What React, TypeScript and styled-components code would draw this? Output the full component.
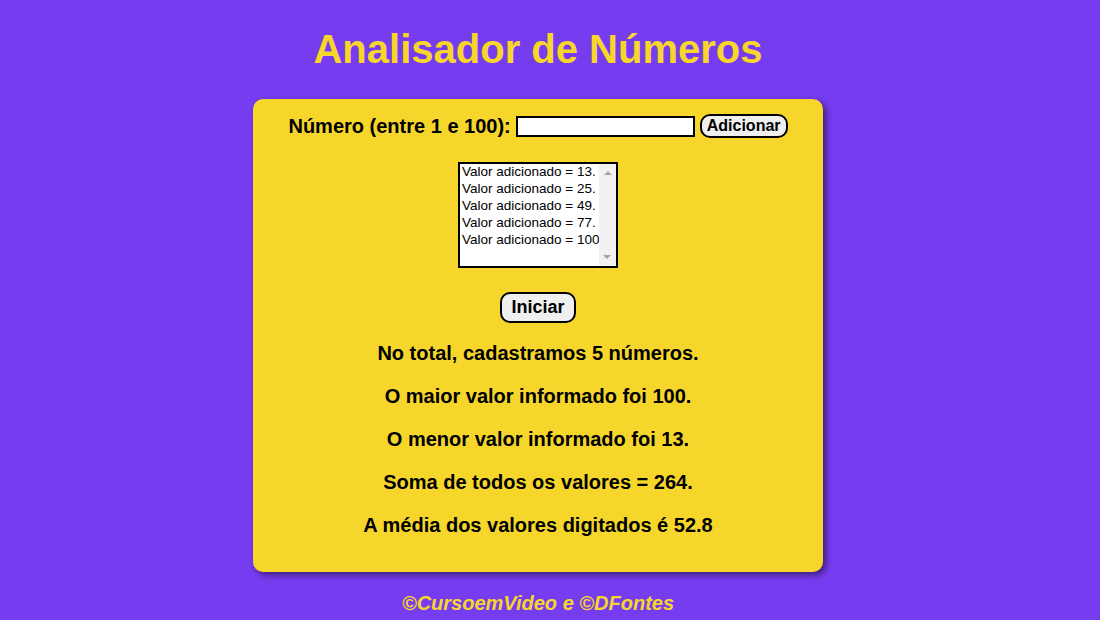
import React from 'react';
import styled, { createGlobalStyle } from 'styled-components';

const GlobalStyle = createGlobalStyle`
  html, body {
    margin: 0;
    padding: 0;
  }
  body {
    background-color: #763cef;
    font-family: "Liberation Sans", Arial, sans-serif;
  }
`;

// Page column, leaves room for the window scrollbar like the original
const Page = styled.div`
  width: calc(100% - 24px);
`;

const Header = styled.header`
  text-align: center;
  padding-top: 25px;
`;

const Title = styled.h1`
  margin: 0;
  font-size: 40px;
  line-height: 48px;
  font-weight: 700;
  color: #f6d62a;
`;

// Yellow card with rounded corners and soft shadow
const Card = styled.section`
  width: 570px;
  box-sizing: border-box;
  margin: 26px auto 0;
  padding: 15px 20px 15px;
  background-color: #f6d62a;
  border-radius: 10px;
  box-shadow: 3px 3px 6px rgba(0, 0, 0, 0.5);
  text-align: center;
`;

const FormRow = styled.div`
  display: flex;
  justify-content: center;
  align-items: center;
  gap: 5px;
`;

const Label = styled.label`
  font-size: 20px;
  font-weight: 700;
  color: #000;
`;

const NumberInput = styled.input`
  width: 173px;
  height: 17px;
  border: 2px solid #000;
  padding: 0 1px;
  background: #fff;
  font-family: inherit;
`;

const Button = styled.button<{ $big?: boolean }>`
  font-family: "Liberation Sans", Arial, sans-serif;
  font-weight: 700;
  font-size: ${p => (p.$big ? '18px' : '16px')};
  padding: ${p => (p.$big ? '3px 9px' : '1px 5px')};
  border: 2px solid #000;
  border-radius: 10px;
  background-color: #efefef;
  color: #000;
`;

// Multi-line list box with its always-visible scrollbar
const ListBox = styled.div`
  display: flex;
  margin: 24px auto 0;
  width: 160px;
  height: 106px;
  box-sizing: border-box;
  border: 2px solid #000;
  background: #fff;
  text-align: left;
`;

const Options = styled.ul`
  flex: 1;
  min-width: 0;
  margin: 0;
  padding: 0;
  list-style: none;
  overflow: hidden;
`;

const Option = styled.li`
  height: 17px;
  line-height: 16px;
  padding-left: 2px;
  white-space: nowrap;
  font-family: "Liberation Sans", Arial, sans-serif;
  font-size: 13.5px;
  color: #000;
`;

const ScrollBar = styled.div`
  width: 17px;
  flex: none;
  background: #f1f1f1;
  display: flex;
  flex-direction: column;
  justify-content: space-between;
`;

const ScrollArrow = styled.div<{ $down?: boolean }>`
  height: 17px;
  display: flex;
  align-items: center;
  justify-content: center;
  transform: ${p => (p.$down ? 'rotate(180deg)' : 'none')};
`;

const Arrow = () => (
  <svg width="8" height="4" viewBox="0 0 8 4">
    <path d="M4 0 L8 4 L0 4 Z" fill="#a3a3a3" />
  </svg>
);

const StartRow = styled.div`
  margin-top: 24px;
`;

const Result = styled.p`
  margin: 20px 0;
  font-size: 20px;
  font-weight: 700;
  color: #000;
`;

const Results = styled.div`
  margin-top: -1px;
`;

const Footer = styled.footer`
  text-align: center;
  margin-top: 20px;
  font-size: 20px;
  font-weight: 700;
  font-style: italic;
  color: #f6d62a;
`;

const values = [13, 25, 49, 77, 100];

const App: React.FC = () => {
  const total = values.reduce((a, b) => a + b, 0);
  return (
    <Page>
      <GlobalStyle />
      <Header>
        <Title>Analisador de Números</Title>
      </Header>
      <Card>
        <FormRow>
          <Label htmlFor="num">Número (entre 1 e 100):</Label>
          <NumberInput id="num" type="number" />
          <Button type="button">Adicionar</Button>
        </FormRow>
        <ListBox role="listbox" aria-multiselectable="true">
          <Options>
            {values.map(v => (
              <Option key={v} role="option">Valor adicionado = {v}.</Option>
            ))}
          </Options>
          <ScrollBar>
            <ScrollArrow><Arrow /></ScrollArrow>
            <ScrollArrow $down><Arrow /></ScrollArrow>
          </ScrollBar>
        </ListBox>
        <StartRow>
          <Button type="button" $big>Iniciar</Button>
        </StartRow>
        <Results>
          <Result>No total, cadastramos {values.length} números.</Result>
          <Result>O maior valor informado foi {Math.max(...values)}.</Result>
          <Result>O menor valor informado foi {Math.min(...values)}.</Result>
          <Result>Soma de todos os valores = {total}.</Result>
          <Result>A média dos valores digitados é {total / values.length}</Result>
        </Results>
      </Card>
      <Footer>©CursoemVideo e ©DFontes</Footer>
    </Page>
  );
};

export default App;
